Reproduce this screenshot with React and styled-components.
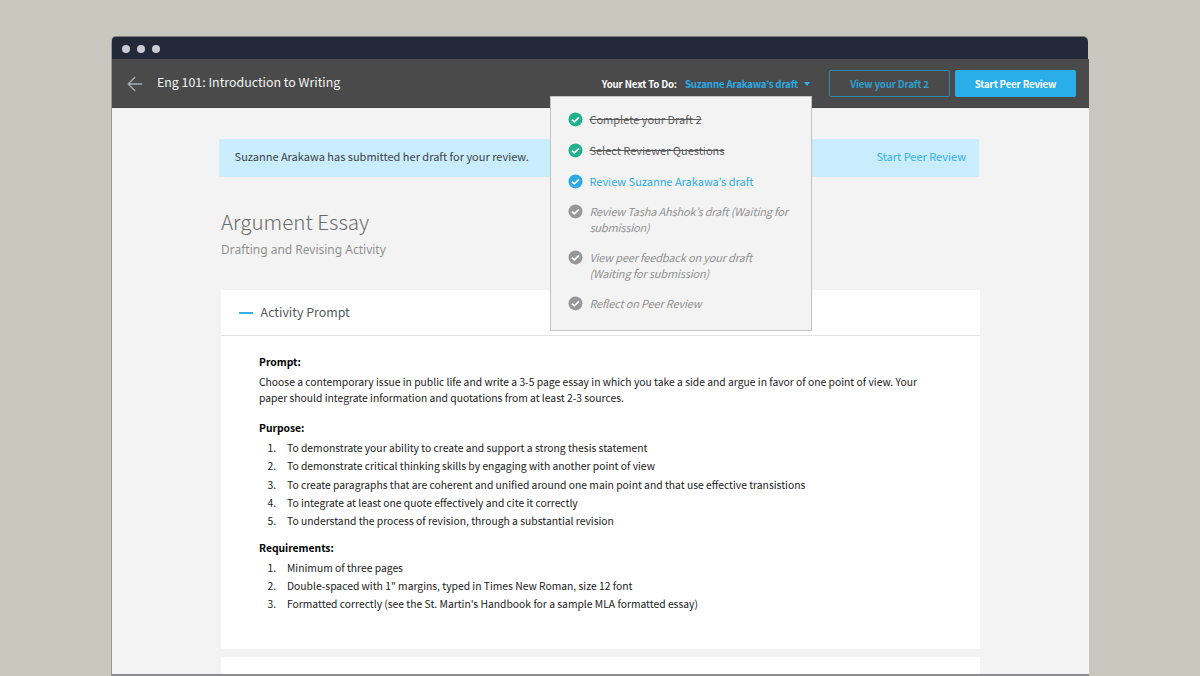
import React from 'react';
import styled, { createGlobalStyle } from 'styled-components';

const sans = '"Noto Sans CJK KR", "Noto Sans", sans-serif';

const GlobalStyle = createGlobalStyle`
  * { box-sizing: border-box; }
  body {
    margin: 0;
    height: 676px;
    overflow: hidden;
    background: #c7c7be;
    font-family: ${sans};
  }
  h1, h2, h3, p, ol, ul { margin: 0; padding: 0; font-weight: 400; }
  ol, ul { list-style: none; }
  button { font-family: inherit; cursor: pointer; }
`;

const Desktop = styled.div`
  height: 676px;
  padding: 37px 111px 0;
  overflow: hidden;
`;

const Window = styled.div`
  display: flex;
  flex-direction: column;
  width: 978px;
  height: 639px;
  border-left: 1px solid #98989a;
  border-bottom: 2px solid #8c8b90;
  border-radius: 5px 5px 0 0;
  background: linear-gradient(#c7c7be 22px, #f3f3f3 22px);
`;

const TitleBar = styled.div`
  display: flex;
  align-items: center;
  gap: 7px;
  flex: none;
  width: 976px;
  height: 22px;
  padding: 1px 0 0 9.6px;
  border-radius: 4px 5px 0 0;
  background: #232938;
  box-shadow: 0 -1px 0 rgba(70, 72, 76, 0.6);
`;

const Dot = styled.span`
  width: 8px;
  height: 8px;
  border-radius: 50%;
  background: #cbccd2;
`;

const Header = styled.header`
  display: flex;
  align-items: center;
  flex: none;
  height: 49px;
  padding: 0 13px 0 15px;
  border-bottom: 1px solid #464646;
  background: #4a4a4a;
`;

const BackIcon = styled.svg`
  margin-right: 14px;
  margin-top: 2px;
`;

const Course = styled.h1`
  flex: 1;
  padding-bottom: 2px;
  color: #f4f4f4;
  font-size: 12.4px;
  line-height: 20px;
`;

const TodoLabel = styled.span`
  margin-right: 8px;
  padding-top: 1px;
  color: #fff;
  font-size: 9.7px;
  font-weight: 700;
  line-height: 16px;
  letter-spacing: -0.15px;
`;

const Todo = styled.div`
  position: relative;
  display: flex;
  align-items: center;
  margin-right: 19px;
`;

const TodoTrigger = styled.button`
  display: flex;
  align-items: center;
  gap: 6px;
  padding: 1px 0 0;
  border: 0;
  background: none;
  color: #29abe5;
  font-size: 9.7px;
  font-weight: 700;
  line-height: 16px;
  letter-spacing: -0.18px;
`;

const Menu = styled.ul`
  position: absolute;
  z-index: 2;
  top: 21px;
  right: -2px;
  display: flex;
  flex-direction: column;
  gap: 15.3px;
  width: 262px;
  height: 235px;
  padding: 15.6px 16.7px;
  border: 1px solid #c4c4c4;
  background: #f3f3f3;
`;

const tones = {
  done: { text: '#5b5b5b', icon: '#21b18f' },
  active: { text: '#2cabe4', icon: '#29aae6' },
  waiting: { text: '#919191', icon: '#979797' },
};

const MenuItem = styled.li`
  display: flex;
  gap: 6.7px;
  color: ${p => tones[p.$tone].text};
  font-size: 11px;
  line-height: 15.4px;
  font-style: ${p => (p.$tone === 'waiting' ? 'italic' : 'normal')};
  letter-spacing: ${p => (p.$tone === 'waiting' ? '-0.18px' : 'normal')};
  text-decoration: ${p => (p.$tone === 'done' ? 'line-through' : 'none')};
  white-space: nowrap;
`;

const HeaderButton = styled.button`
  width: ${p => p.$width}px;
  height: 27px;
  margin-right: ${p => p.$gap || 0}px;
  padding: 0;
  border: 1px solid ${p => (p.$solid ? '#29aee9' : '#3089b1')};
  border-radius: 2px;
  background: ${p => (p.$solid ? '#29aee9' : 'transparent')};
  color: ${p => (p.$solid ? '#fff' : '#2ba0d3')};
  font-size: 9.7px;
  font-weight: 700;
  line-height: 26px;
  letter-spacing: -0.17px;
`;

const Content = styled.main`
  flex: 1;
  min-height: 0;
  overflow: hidden;
  padding: 31px 109px 0 107px;
`;

const Banner = styled.div`
  display: flex;
  justify-content: space-between;
  width: 760px;
  height: 38px;
  padding: 0 13px 2px 15.6px;
  background: #c9edfd;
  color: #3c4246;
  font-size: 11px;
  line-height: 34px;
`;

const BannerLink = styled.a`
  color: #35afe4;
`;

const Heading = styled.h2`
  margin: 28px 0 0 2px;
  color: #6a6a6a;
  font-size: 20.6px;
  font-weight: 300;
  line-height: 32px;
`;

const Subheading = styled.p`
  margin: 3px 0 0 2px;
  color: #929292;
  font-family: "Noto Sans", "Open Sans", sans-serif;
  font-size: 12px;
  line-height: 20px;
`;

const Card = styled.section`
  width: 759px;
  height: ${p => p.$height}px;
  margin: ${p => p.$top}px 0 0 2px;
  background: #fff;
`;

const CardHeader = styled.div`
  display: flex;
  align-items: center;
  height: 46px;
  padding-left: 17.6px;
  border-bottom: 1px solid #e2e2e2;
`;

const Collapse = styled.span`
  width: 14px;
  height: 2px;
  margin: 1px 8px 0 0;
  background: #37b0e8;
`;

const CardTitle = styled.h3`
  padding-bottom: 2px;
  color: #585858;
  font-size: 12.4px;
  line-height: 20px;
`;

const CardBody = styled.div`
  padding: 17px 38px;
  color: #1a1a1a;
  font-size: 10.32px;
`;

const Label = styled.h3`
  margin-top: ${p => p.$top || 0}px;
  color: #000;
  font-size: 10.32px;
  font-weight: 700;
  line-height: 18px;
`;

const Paragraph = styled.p`
  margin-top: 3px;
  line-height: 16.2px;
  white-space: nowrap;
`;

const Steps = styled.ol`
  margin-top: 2px;
`;

const Step = styled.li`
  display: flex;
  line-height: 18.35px;
`;

const StepNumber = styled.span`
  width: 28px;
  padding-left: 8.5px;
`;

function CheckIcon({ color }) {
  return (
    <svg width="15" height="15" viewBox="0 0 15 15" style={{ flex: 'none' }}>
      <circle cx="7.5" cy="7.4" r="7" fill={color} />
      <path d="M3.9 7.7 6.3 9.9 11 5.4" fill="none" stroke="#fff" strokeWidth="1.7" />
    </svg>
  );
}

const todos = [
  { tone: 'done', lines: ['Complete your Draft 2'] },
  { tone: 'done', lines: ['Select Reviewer Questions'] },
  { tone: 'active', lines: ['Review Suzanne Arakawa’s draft'] },
  { tone: 'waiting', lines: ['Review Tasha Ahshok’s draft (Waiting for', 'submission)'] },
  { tone: 'waiting', lines: ['View peer feedback on your draft', '(Waiting for submission)'] },
  { tone: 'waiting', lines: ['Reflect on Peer Review'] },
];

const purposes = [
  'To demonstrate your ability to create and support a strong thesis statement',
  'To demonstrate critical thinking skills by engaging with another point of view',
  'To create paragraphs that are coherent and unified around one main point and that use effective transistions',
  'To integrate at least one quote effectively and cite it correctly',
  'To understand the process of revision, through a substantial revision',
];

const requirements = [
  'Minimum of three pages',
  'Double-spaced with 1" margins, typed in Times New Roman, size 12 font',
  "Formatted correctly (see the St. Martin's Handbook for a sample MLA formatted essay)",
];

function NumberedList({ items }) {
  return (
    <Steps>
      {items.map((text, i) => (
        <Step key={text}>
          <StepNumber>{i + 1}.</StepNumber>
          <span>{text}</span>
        </Step>
      ))}
    </Steps>
  );
}

export default function App() {
  return (
    <Desktop>
      <GlobalStyle />
      <Window>
        <TitleBar>
          <Dot />
          <Dot />
          <Dot />
        </TitleBar>
        <Header>
          <BackIcon width="16" height="16" viewBox="0 0 16 16" fill="none" stroke="#a3b0b8" strokeWidth="1.3">
            <path d="M15.2 8H1.4M8.2 1 1.2 8l7 7" />
          </BackIcon>
          <Course>Eng 101: Introduction to Writing</Course>
          <TodoLabel>Your Next To Do:</TodoLabel>
          <Todo>
            <TodoTrigger>
              Suzanne Arakawa’s draft
              <svg width="6" height="5" viewBox="0 0 6 5">
                <path d="M0 1h6L3 5z" fill="#29b4f2" />
              </svg>
            </TodoTrigger>
            <Menu>
              {todos.map(({ tone, lines }) => (
                <MenuItem key={lines[0]} $tone={tone}>
                  <CheckIcon color={tones[tone].icon} />
                  <span>
                    {lines[0]}
                    {lines[1] && <br />}
                    {lines[1]}
                  </span>
                </MenuItem>
              ))}
            </Menu>
          </Todo>
          <HeaderButton $width={121} $gap={5}>View your Draft 2</HeaderButton>
          <HeaderButton $width={121} $solid>Start Peer Review</HeaderButton>
        </Header>
        <Content>
          <Banner>
            <span>Suzanne Arakawa has submitted her draft for your review.</span>
            <BannerLink>Start Peer Review</BannerLink>
          </Banner>
          <Heading>Argument Essay</Heading>
          <Subheading>Drafting and Revising Activity</Subheading>
          <Card $height={359} $top={30}>
            <CardHeader>
              <Collapse />
              <CardTitle>Activity Prompt</CardTitle>
            </CardHeader>
            <CardBody>
              <Label>Prompt:</Label>
              <Paragraph>
                Choose a contemporary issue in public life and write a 3-5 page essay in which you take a side and argue in favor of one point of view. Your
                <br />
                paper should integrate information and quotations from at least 2-3 sources.
              </Paragraph>
              <Label $top={12.6}>Purpose:</Label>
              <NumberedList items={purposes} />
              <Label $top={8}>Requirements:</Label>
              <NumberedList items={requirements} />
            </CardBody>
          </Card>
          <Card $height={40} $top={8} />
        </Content>
      </Window>
    </Desktop>
  );
}
